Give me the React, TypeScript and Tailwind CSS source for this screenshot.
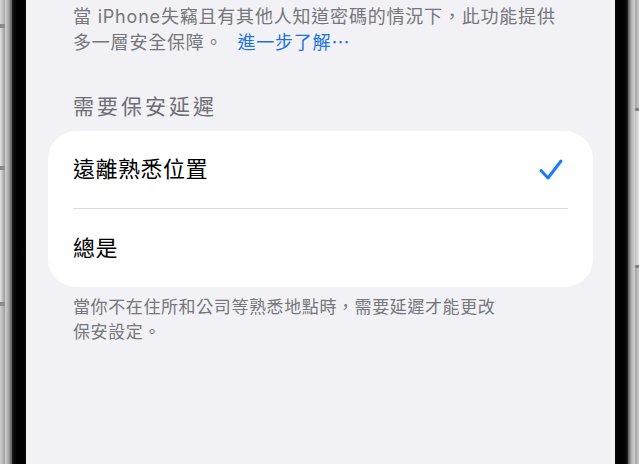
const font = { fontFamily: '"Inter", "Noto Sans CJK TC", "Noto Sans", sans-serif' };

function FrameLeft() {
  return (
    <div className="flex h-full shrink-0">
      <div className="flex w-[5px] flex-col bg-[#8d8d8d]">
        <div className="h-[24px] bg-gradient-to-r from-[#d9d9d9] to-[#a9a9a9]" />
        <div className="h-[4px] bg-[#8a8a8a]" />
        <div className="h-[138px] bg-gradient-to-r from-[#e4e4e4] via-[#bdbdbd] to-[#9a9a9a]" />
        <div className="h-[4px] bg-[#8a8a8a]" />
        <div className="h-[132px] bg-gradient-to-r from-[#e4e4e4] via-[#bdbdbd] to-[#9a9a9a]" />
        <div className="h-[4px] bg-[#8a8a8a]" />
        <div className="flex-1 bg-gradient-to-r from-[#cfcfcf] to-[#9f9f9f]" />
      </div>
      <div className="w-[7px] bg-gradient-to-r from-[#d4d4d4] via-[#a8a8a8] to-[#5c5c5c]" />
      <div className="w-[14px] bg-gradient-to-r from-[#1a1a1a] via-black to-[#0a0a0a]" />
    </div>
  );
}

function FrameRight() {
  return (
    <div className="flex h-full shrink-0">
      <div className="w-[13px] bg-gradient-to-r from-[#0a0a0a] via-black to-[#1c1c1c]" />
      <div className="w-[7px] bg-gradient-to-r from-[#5c5c5c] via-[#b0b0b0] to-[#d6d6d6]" />
      <div className="flex w-[4px] flex-col bg-[#9c9c9c]">
        <div className="h-[108px] bg-gradient-to-r from-[#a0a0a0] to-[#c9c9c9]" />
        <div className="h-[3px] bg-[#808080]" />
        <div className="h-[154px] bg-gradient-to-r from-[#bdbdbd] to-[#e6e6e6]" />
        <div className="h-[3px] bg-[#808080]" />
        <div className="flex-1 bg-gradient-to-r from-[#a0a0a0] to-[#c9c9c9]" />
      </div>
    </div>
  );
}

function Check() {
  return (
    <svg width="26" height="24" viewBox="0 0 26 24" fill="none">
      <path
        d="M3 12.5 L10 20 L23 3"
        stroke="#1a7cf5"
        strokeWidth="3"
        strokeLinecap="round"
        strokeLinejoin="round"
      />
    </svg>
  );
}

export default function App() {
  return (
    <div className="flex h-[464px] w-[639px] overflow-hidden bg-black" style={font}>
      <FrameLeft />
      <div className="flex min-w-0 flex-1 flex-col bg-[#f1f1f6]">
        <p className="pl-[47px] pt-[4px] text-[18px] leading-[26px] tracking-[0.8px] text-[#76767c]">
          當 iPhone失竊且有其他人知道密碼的情況下，此功能提供
          <br />
          多一層安全保障。<span className="ml-[14px] text-[#1a73e8]">進一步了解⋯</span>
        </p>
        <h2 className="mt-[37px] pl-[47px] text-[21px] font-normal leading-[28px] tracking-[3px] text-[#6e6e74]">
          需要保安延遲
        </h2>
        <div className="mx-[22px] mt-[10px] flex flex-col rounded-[28px] bg-white">
          <div className="flex h-[77px] items-center justify-between pl-[25px] pr-[29px]">
            <span className="text-[22px] tracking-[0.5px] text-black">遠離熟悉位置</span>
            <Check />
          </div>
          <div className="mx-[25px] h-px bg-[#dcdce0]" />
          <div className="flex h-[78px] items-center pl-[25px]">
            <span className="text-[22px] tracking-[0.5px] text-black">總是</span>
          </div>
        </div>
        <p className="mt-[8px] pl-[47px] text-[17px] leading-[25px] tracking-[0.6px] text-[#76767c]">
          當你不在住所和公司等熟悉地點時，需要延遲才能更改
          <br />
          保安設定。
        </p>
      </div>
      <FrameRight />
    </div>
  );
}
